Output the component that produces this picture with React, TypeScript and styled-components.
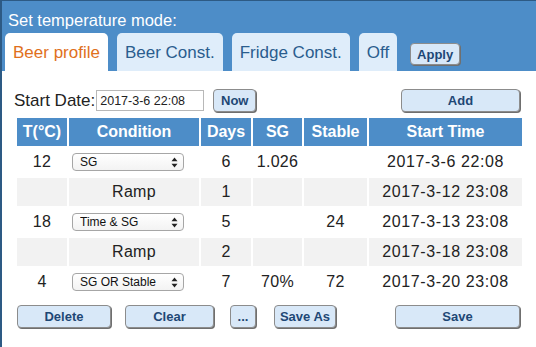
import React from "react";
import styled, { createGlobalStyle } from "styled-components";

const TABS = ["Beer profile", "Beer Const.", "Fridge Const.", "Off"];

type Step = {
  temp?: string;
  condition?: string;
  ramp?: boolean;
  days: string;
  sg?: string;
  stable?: string;
  start: string;
};

const STEPS: Step[] = [
  { temp: "12", condition: "SG", days: "6", sg: "1.026", start: "2017-3-6 22:08" },
  { ramp: true, days: "1", start: "2017-3-12 23:08" },
  { temp: "18", condition: "Time & SG", days: "5", stable: "24", start: "2017-3-13 23:08" },
  { ramp: true, days: "2", start: "2017-3-18 23:08" },
  { temp: "4", condition: "SG OR Stable", days: "7", sg: "70%", stable: "72", start: "2017-3-20 23:08" },
];

const CONDITIONS = ["Time", "SG", "Stable", "Time & SG", "Time & Stable", "SG OR Stable"];

export default function App() {
  return (
    <>
      <GlobalStyle />
      <Panel>
        <Header>
          <Title>Set temperature mode:</Title>
          <TabRow>
            {TABS.map((t, i) => (
              <Tab key={t} $active={i === 0}>
                {t}
              </Tab>
            ))}
            <ApplyButton>Apply</ApplyButton>
          </TabRow>
        </Header>
        <Body>
          <DateRow>
            <DateLabel>Start Date:</DateLabel>
            <DateInput defaultValue="2017-3-6 22:08" />
            <Button $w={43} $ml={9}>
              Now
            </Button>
            <AddButton $w={119} $ml={0}>
              Add
            </AddButton>
          </DateRow>
          <Table>
            <thead>
              <tr>
                <Th $w={50}>T(°C)</Th>
                <Th $w={130}>Condition</Th>
                <Th $w={50}>Days</Th>
                <Th $w={49}>SG</Th>
                <Th $w={63}>Stable</Th>
                <Th>Start Time</Th>
              </tr>
            </thead>
            <tbody>
              {STEPS.map((s, i) => (
                <Row key={i} $shaded={!!s.ramp}>
                  <Td>{s.temp}</Td>
                  <Td>
                    {s.ramp ? (
                      "Ramp"
                    ) : (
                      <SelectWrap>
                        <Select defaultValue={s.condition}>
                          {CONDITIONS.map((c) => (
                            <option key={c}>{c}</option>
                          ))}
                        </Select>
                        <SelectArrows width="7" height="11" viewBox="0 0 7 11">
                          <path d="M3.5 0.5 L6.5 4.2 L0.5 4.2 Z" fill="#222" />
                          <path d="M3.5 10.5 L6.5 6.8 L0.5 6.8 Z" fill="#222" />
                        </SelectArrows>
                      </SelectWrap>
                    )}
                  </Td>
                  <Td>{s.days}</Td>
                  <Td>{s.sg}</Td>
                  <Td>{s.stable}</Td>
                  <Td $spaced>{s.start}</Td>
                </Row>
              ))}
            </tbody>
          </Table>
          <ButtonRow>
            <Button $w={94} $ml={0}>
              Delete
            </Button>
            <Button $w={89} $ml={14}>
              Clear
            </Button>
            <Button $w={26} $ml={16}>
              ...
            </Button>
            <Button $w={62} $ml={18}>
              Save As
            </Button>
            <Button $w={125} $ml={59}>
              Save
            </Button>
          </ButtonRow>
        </Body>
      </Panel>
    </>
  );
}

const GlobalStyle = createGlobalStyle`
  html, body {
    margin: 0;
    padding: 0;
    background: #fff;
    overflow: hidden;
  }
  body {
    font-family: "Liberation Sans", Arial, Helvetica, sans-serif;
    color: #222;
  }
`;

const Panel = styled.div`
  min-height: 100vh;
  border-left: 2px solid #2d5a84;
  border-top: 1px solid #2d5a84;
  background: #fff;
`;

const Header = styled.div`
  background: #4d8dc8;
  padding: 10px 0 0 3px;
`;

const Title = styled.div`
  color: #fff;
  font-size: 16.5px;
  line-height: 18px;
  padding-left: 3px;
`;

const TabRow = styled.div`
  display: flex;
  align-items: flex-end;
  margin-top: 4px;
  height: 38px;
`;

const Tab = styled.div<{ $active?: boolean }>`
  height: 38px;
  display: flex;
  align-items: center;
  padding: 1px 8px 0;
  box-sizing: border-box;
  margin-right: 9px;
  border-radius: 5px 5px 0 0;
  font-size: 17px;
  background: ${(p) => (p.$active ? "#fff" : "#dfedfa")};
  color: ${(p) => (p.$active ? "#e0701c" : "#2a5d8e")};
`;

const Button = styled.button<{ $w: number; $ml: number }>`
  width: ${(p) => p.$w}px;
  margin-left: ${(p) => p.$ml}px;
  height: 23px;
  padding: 0;
  box-sizing: border-box;
  background: #d8e8f8;
  border: 1px solid #8c8c8c;
  border-radius: 4px;
  box-shadow: 1px 1px 0 #6f6f6f;
  color: #1e4775;
  font-family: "Liberation Sans", Arial, sans-serif;
  font-weight: bold;
  font-size: 13px;
  cursor: pointer;
`;

const ApplyButton = styled(Button).attrs({ $w: 50, $ml: 4 })`
  height: 22px;
  margin-bottom: 6px;
`;

const AddButton = styled(Button)`
  margin-left: auto;
`;

const Body = styled.div`
  padding: 18px 0 0 15px;
  width: 505px;
`;

const DateRow = styled.div`
  display: flex;
  align-items: center;
  margin: 0 2px 0 -3px;
  height: 23px;
`;

const DateLabel = styled.span`
  font-size: 17px;
  color: #222;
`;

const DateInput = styled.input`
  width: 108px;
  height: 21px;
  box-sizing: border-box;
  border: 1px solid #b8b8b8;
  padding: 0 3px;
  font-family: "Liberation Sans", Arial, sans-serif;
  font-size: 12.5px;
  color: #222;
  margin-left: 1px;
`;

const Table = styled.table`
  border-collapse: separate;
  border-spacing: 2px;
  margin: 4px 0 0 -2px;
  width: 509px;
  table-layout: fixed;
`;

const Th = styled.th<{ $w?: number }>`
  width: ${(p) => (p.$w ? `${p.$w}px` : "auto")};
  height: 28px;
  padding: 0;
  background: #4d8dc8;
  color: #fff;
  font-size: 16px;
  font-weight: bold;
  text-align: center;
`;

const Row = styled.tr<{ $shaded: boolean }>`
  background: ${(p) => (p.$shaded ? "#f2f2f2" : "#fff")};
`;

const Td = styled.td<{ $spaced?: boolean }>`
  height: 28px;
  padding: 0;
  font-size: 16px;
  text-align: center;
  color: #222;
  letter-spacing: ${(p) => (p.$spaced ? "0.6px" : "0.3px")};
`;

const SelectWrap = styled.div`
  position: relative;
  width: 112px;
  height: 18px;
  margin-left: 3px;
`;

const Select = styled.select`
  appearance: none;
  -webkit-appearance: none;
  width: 112px;
  height: 18px;
  box-sizing: border-box;
  border: 1px solid #a6a6a6;
  border-radius: 4px;
  background: linear-gradient(#ffffff, #f3f3f3);
  font-family: "Liberation Sans", Arial, sans-serif;
  font-size: 12px;
  color: #111;
  padding: 0 0 0 7px;
  display: block;
`;

const SelectArrows = styled.svg`
  position: absolute;
  right: 6px;
  top: 4px;
  pointer-events: none;
`;

const ButtonRow = styled.div`
  display: flex;
  margin-top: 7px;
`;
